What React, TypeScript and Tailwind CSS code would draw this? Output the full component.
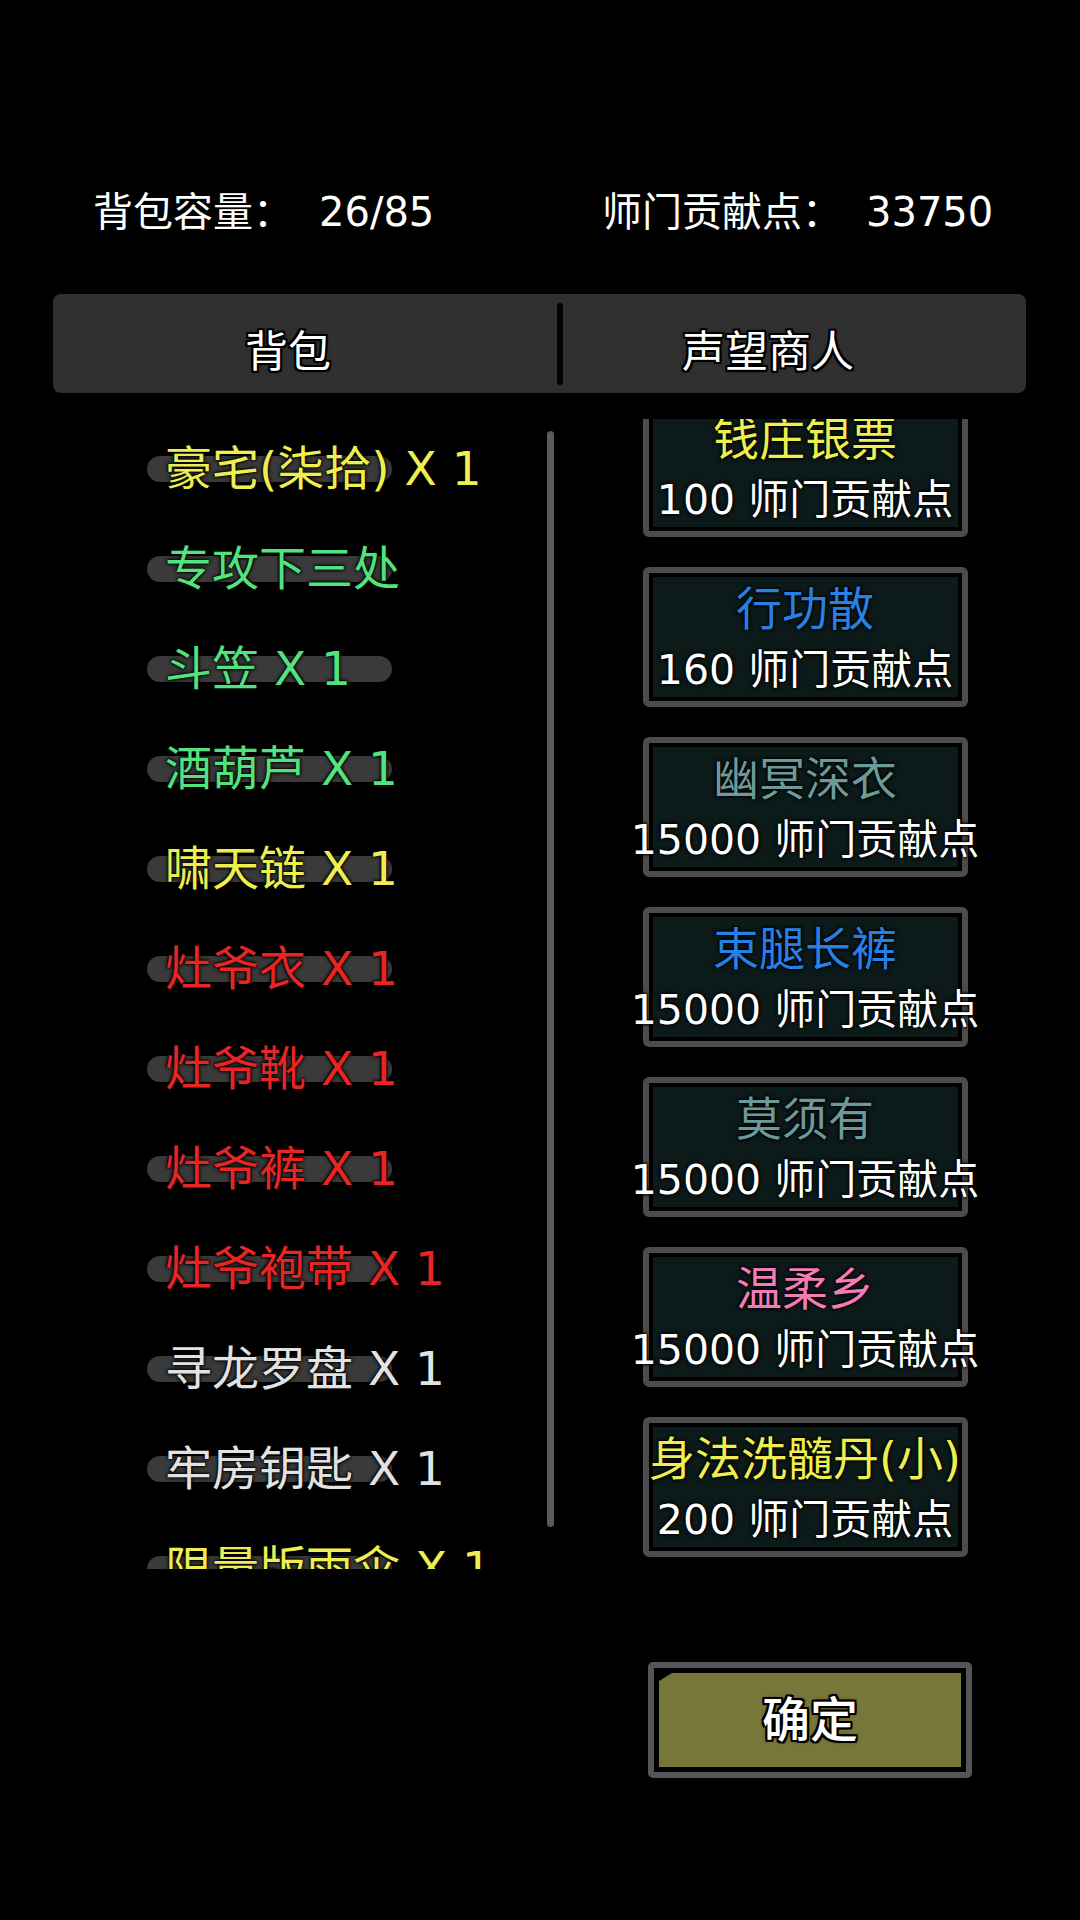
import type { FC } from 'react';

interface BagItem {
  name: string;
  color: string;
}

interface ShopItem {
  name: string;
  color: string;
  price: number;
}

const BAG_ITEMS: BagItem[] = [
  { name: '豪宅(柒拾) X 1', color: 'text-[#eeee50]' },
  { name: '专攻下三处', color: 'text-[#52e27e]' },
  { name: '斗笠 X 1', color: 'text-[#52e27e]' },
  { name: '酒葫芦 X 1', color: 'text-[#52e27e]' },
  { name: '啸天链 X 1', color: 'text-[#eeee50]' },
  { name: '灶爷衣 X 1', color: 'text-[#e82424]' },
  { name: '灶爷靴 X 1', color: 'text-[#e82424]' },
  { name: '灶爷裤 X 1', color: 'text-[#e82424]' },
  { name: '灶爷袍带 X 1', color: 'text-[#e82424]' },
  { name: '寻龙罗盘 X 1', color: 'text-[#e2e2e2]' },
  { name: '牢房钥匙 X 1', color: 'text-[#e2e2e2]' },
  { name: '限量版雨伞 X 1', color: 'text-[#eeee50]' }
];

const SHOP_ITEMS: ShopItem[] = [
  { name: '钱庄银票', color: 'text-[#eeee50]', price: 100 },
  { name: '行功散', color: 'text-[#2a80e2]', price: 160 },
  { name: '幽冥深衣', color: 'text-[#6c9a9a]', price: 15000 },
  { name: '束腿长裤', color: 'text-[#2a80e2]', price: 15000 },
  { name: '莫须有', color: 'text-[#6c9a9a]', price: 15000 },
  { name: '温柔乡', color: 'text-[#f27cb6]', price: 15000 },
  { name: '身法洗髓丹(小)', color: 'text-[#eeee50]', price: 200 }
];

const outline = '[text-shadow:0_0_2px_#000,0_0_3px_#000,0_0_4px_#000]';
const heavyOutline =
  '[text-shadow:2px_0_0_#000,-2px_0_0_#000,0_2px_0_#000,0_-2px_0_#000,2px_2px_0_#000,-2px_-2px_0_#000,2px_-2px_0_#000,-2px_2px_0_#000,0_0_4px_#000]';

const BagRow: FC<{ item: BagItem }> = ({ item }) => (
  <div className="relative flex h-[100px] shrink-0 items-center">
    <div className="absolute left-0 top-1/2 h-[26px] w-[245px] -translate-y-1/2 rounded-full bg-[#3a3a3a]" />
    <span
      className={`relative whitespace-nowrap pl-[18px] text-[47px] leading-[100px] ${item.color} ${outline}`}
    >
      {item.name}
    </span>
  </div>
);

const ShopCard: FC<{ item: ShopItem }> = ({ item }) => (
  <div className="h-[140px] w-[325px] shrink-0 rounded-[6px] border-[6px] border-[#4c4c4c] bg-black p-[4px]">
    <div className="flex h-full w-full flex-col items-center bg-[#0d1a1a] pt-[9px]">
      <div
        className={`whitespace-nowrap text-[46px] leading-[46px] ${item.color} ${outline}`}
      >
        {item.name}
      </div>
      <div
        className={`mt-[15px] whitespace-nowrap text-[41px] leading-[46px] text-white ${outline}`}
      >
        {item.price} 师门贡献点
      </div>
    </div>
  </div>
);

const App: FC = () => {
  return (
    <div className="h-[1920px] w-[1080px] overflow-hidden bg-black font-['DejaVu_Sans','Noto_Sans_CJK_SC',sans-serif] text-white">
      {/* header */}
      <div className="flex h-[240px] items-start pt-[182px] text-[40px] leading-[60px]">
        <div className="ml-[93px] flex w-[509px]">
          <span>背包容量：</span>
          <span className="ml-[26px]">26/85</span>
        </div>
        <div className="flex">
          <span>师门贡献点：</span>
          <span className="ml-[24px]">33750</span>
        </div>
      </div>

      {/* tabs */}
      <div className="ml-[53px] mt-[54px] flex h-[99px] w-[973px] rounded-[8px] bg-[#303030]">
        <div
          className={`flex w-[504px] items-center justify-center pr-[34px] pt-[18px] text-[43px] ${heavyOutline}`}
        >
          背包
        </div>
        <div className="h-[82px] w-[6px] self-center rounded-full bg-black" />
        <div
          className={`flex flex-1 items-center justify-center pr-[53px] pt-[18px] text-[43px] ${heavyOutline}`}
        >
          声望商人
        </div>
      </div>

      {/* lists */}
      <div className="mt-[26px] flex h-[1150px]">
        <div className="ml-[147px] flex h-full w-[400px] flex-col overflow-hidden">
          {BAG_ITEMS.map((item) => (
            <BagRow item={item} key={item.name} />
          ))}
        </div>
        <div className="mt-[12px] h-[1096px] w-[7px] rounded-full bg-[#5a5a5a]" />
        <div className="ml-[66px] h-full w-[370px] overflow-hidden">
          <div className="-mt-[22px] flex flex-col items-center gap-[30px]">
            {SHOP_ITEMS.map((item) => (
              <ShopCard item={item} key={item.name} />
            ))}
          </div>
        </div>
      </div>

      {/* confirm */}
      <div className="ml-[648px] mt-[93px] h-[116px] w-[324px] rounded-[5px] border-[6px] border-[#555555] bg-black p-[5px]">
        <div className="flex h-full w-full items-center justify-center bg-[#77773a] [clip-path:polygon(13px_0,100%_0,100%_100%,0_100%,0_8px)]">
          <span className={`text-[48px] font-medium ${heavyOutline}`}>确定</span>
        </div>
      </div>
    </div>
  );
};

export default App;
